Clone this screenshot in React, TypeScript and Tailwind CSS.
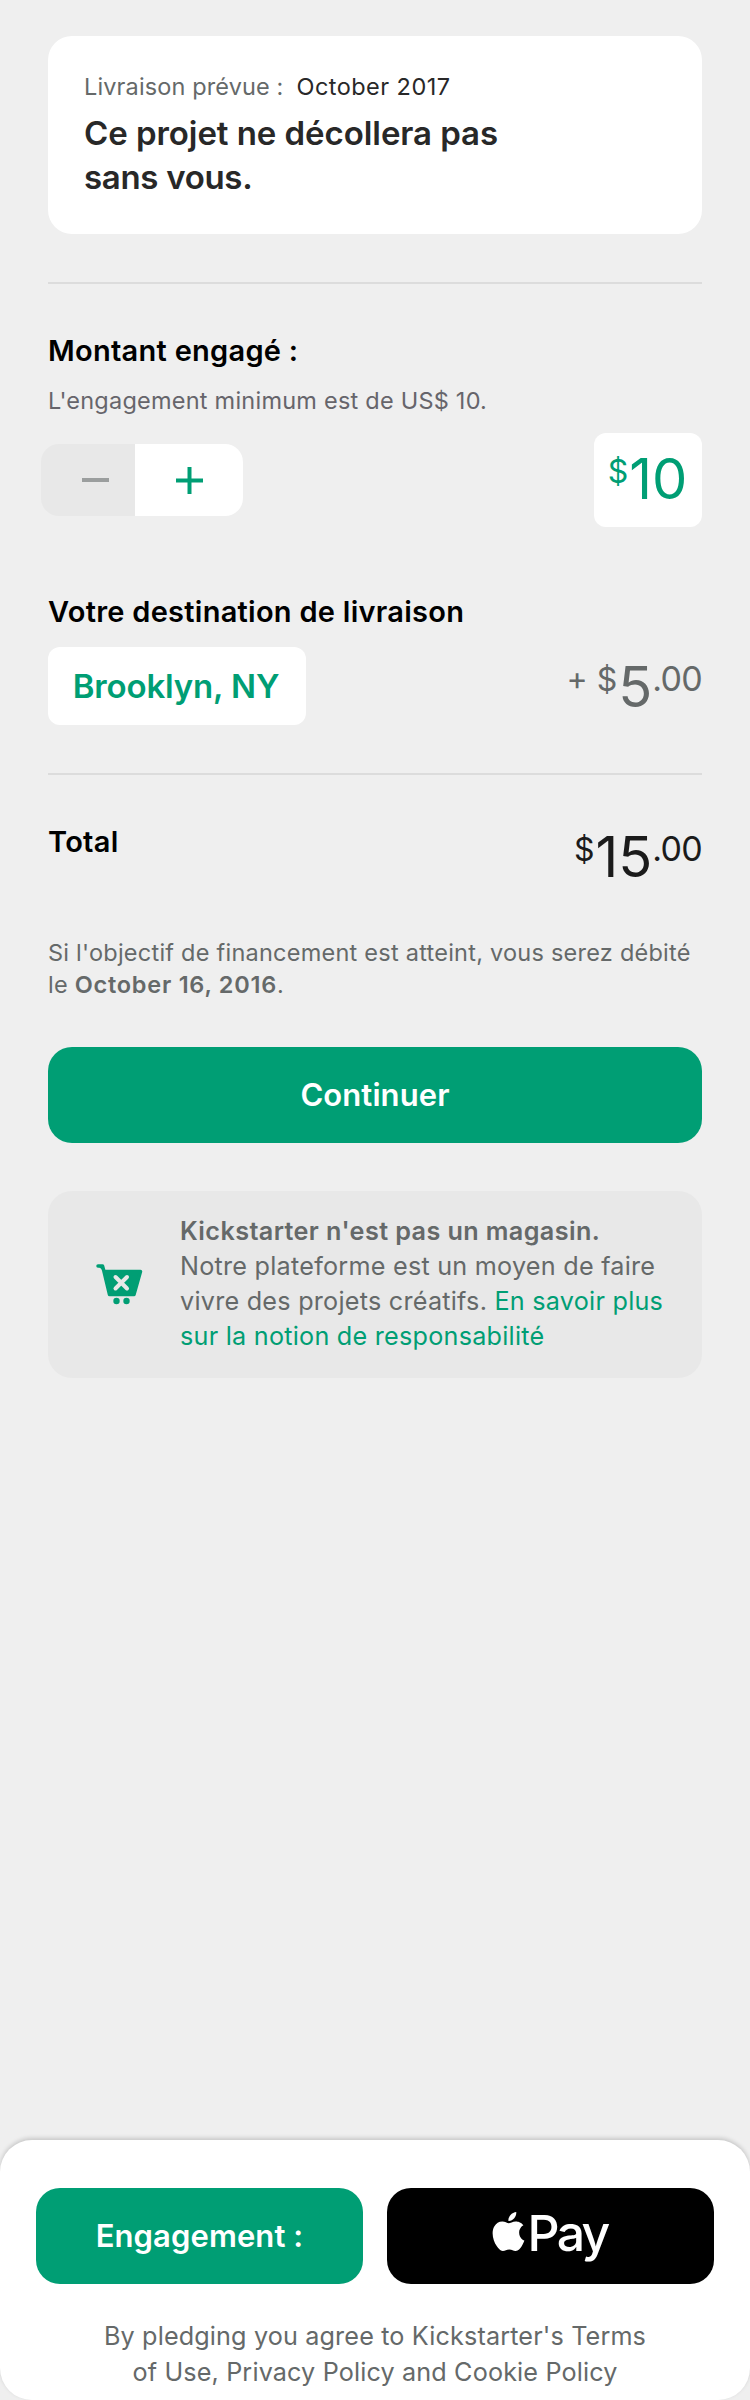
import type { ReactNode } from "react";
import { SiApple } from "react-icons/si";

function Divider() {
  return <div className="mt-12 h-0.5 shrink-0 bg-[#dcdcdc]" />;
}

function Heading({ children, className }: { children: ReactNode; className: string }) {
  return (
    <h2 className={`text-[29px] leading-[38px] font-semibold tracking-[0.27px] whitespace-nowrap text-black ${className}`}>
      {children}
    </h2>
  );
}

function Stepper() {
  return (
    <div className="-ml-[7px] flex h-[72px] w-[202px] overflow-hidden rounded-[18px]">
      <button className="flex w-[94px] items-center justify-end bg-[#e8e8e8] pr-[26px]" aria-label="-">
        <span className="h-1 w-[27px] bg-[#9b9e9e]" />
      </button>
      <button className="flex flex-1 items-center justify-center bg-white text-[#009e74]" aria-label="+">
        <svg viewBox="0 0 27 27" className="h-[27px] w-[27px]" fill="currentColor">
          <path d="M11.500 0h4v11.500H27v4H15.500V27h-4V15.500H0v-4h11.500z" />
        </svg>
      </button>
    </div>
  );
}

function Price({ whole, cents, plus }: { whole: string; cents?: string; plus?: boolean }) {
  return (
    <div className="flex items-start whitespace-nowrap">
      {plus && <span className="mt-[3px] mr-[9px] text-[32px] leading-[34px]">+</span>}
      <span className="mt-[4px] mr-px text-[32px] leading-[34px]">$</span>
      <span className="text-[56px] leading-[56px]">{whole}</span>
      {cents && (
        <span className="mt-[3px] text-[34px] leading-[34px] tracking-[-0.7px]">{cents}</span>
      )}
    </div>
  );
}

function CartIcon() {
  return (
    <svg viewBox="0 0 47 41" className="h-[41px] w-[47px]">
      <path
        d="M2 2H6.500L8 7.500H44.500L38 30.500H13.500L8 7.500"
        fill="#009e74"
        stroke="#009e74"
        strokeWidth="3.500"
        strokeLinecap="round"
        strokeLinejoin="round"
      />
      <path d="M19.500 13L31 24.500M31 13L19.500 24.500" stroke="#e8e8e8" strokeWidth="4" strokeLinecap="round" />
      <circle cx="20.500" cy="37" r="3.200" fill="#009e74" />
      <circle cx="30.500" cy="37" r="3.200" fill="#009e74" />
    </svg>
  );
}

export default function App() {
  return (
    <div className="flex h-[2400px] w-[750px] flex-col bg-[#efefef] font-['Inter',sans-serif] text-[#656969]">
      <main className="flex flex-col px-12 pt-9">
        <section className="h-[198px] rounded-3xl bg-white px-9 pt-[35px] text-[#282828]">
          <p className="flex gap-[13px] text-[23.5px] leading-8 whitespace-nowrap">
            <span className="tracking-[0.13px] text-[#656969]">Livraison prévue :</span>
            <span className="tracking-[0.45px]">October 2017</span>
          </p>
          <h1 className="mt-2 text-[33px] leading-[44px] font-semibold tracking-[-0.06px]">
            Ce projet ne décollera pas
            <br />
            <span className="tracking-[-0.3px]">sans vous.</span>
          </h1>
        </section>

        <Divider />

        <Heading className="mt-12">Montant engagé :</Heading>
        <p className="mt-4 text-[23.5px] leading-[30px] tracking-[0.23px] text-[#66656b]">
          L'engagement minimum est de US$ 10.
        </p>
        <div className="mt-[17px] flex items-center justify-between">
          <Stepper />
          <div className="flex h-[94px] w-[108px] justify-center rounded-xl bg-white pt-[18px] pr-px text-[#009e74]">
            <Price whole="10" />
          </div>
        </div>

        <Heading className="mt-[66px]">Votre destination de livraison</Heading>
        <div className="mt-4 flex h-[78px] items-start justify-between">
          <button className="h-[78px] w-[258px] rounded-xl bg-white pt-0.5 pr-0.5 text-[33px] font-semibold tracking-[-0.15px] whitespace-nowrap text-[#009e74]">
            Brooklyn, NY
          </button>
          <div className="pt-3">
            <Price plus whole="5" cents=".00" />
          </div>
        </div>

        <Divider />

        <div className="mt-12 flex h-[66px] items-start justify-between">
          <Heading className="">Total</Heading>
          <div className="pt-[6px] text-[#1b1b1b]">
            <Price whole="15" cents=".00" />
          </div>
        </div>

        <p className="mt-12 text-[23.5px] leading-8 tracking-[0.24px] whitespace-nowrap">
          Si l'objectif de financement est atteint, vous serez débité
          <br />
          le <strong className="font-semibold tracking-[0.75px]">October 16, 2016</strong>.
        </p>

        <button className="mt-[46px] h-24 rounded-3xl bg-[#009e74] text-[31px] font-semibold tracking-[0.1px] text-white">
          Continuer
        </button>

        <section className="mt-12 flex h-[187px] rounded-3xl bg-[#e8e8e8] pt-[23px] pl-12">
          <div className="mt-[50px] w-[84px] shrink-0">
            <CartIcon />
          </div>
          <p className="text-[25.2px] leading-[35px] tracking-[0.24px] whitespace-nowrap">
            <strong className="font-semibold tracking-[0.4px]">Kickstarter n'est pas un magasin.</strong>
            <br />
            Notre plateforme est un moyen de faire
            <br />
            vivre des projets créatifs. <a className="text-[#009e74]">En savoir plus</a>
            <br />
            <a className="text-[#009e74]">sur la notion de responsabilité</a>
          </p>
        </section>
      </main>

      <footer className="mt-auto h-[260px] rounded-[32px] bg-white px-9 pt-12 shadow-[0_-2px_4px_rgba(0,0,0,0.17)]">
        <div className="grid grid-cols-2 gap-6">
          <button className="h-24 rounded-3xl bg-[#009e74] text-[31px] font-semibold tracking-[0.1px] text-white">
            Engagement :
          </button>
          <button className="flex h-24 items-start justify-center rounded-3xl bg-black pt-[15px] pr-[5px] text-white">
            <SiApple className="mt-[9px] h-[39px] w-[39px]" />
            <span className="text-[50px] leading-[60px] font-medium tracking-[-2.8px]">Pay</span>
          </button>
        </div>
        <p className="mt-[34px] text-center text-[25.2px] leading-9 tracking-[0.14px] whitespace-nowrap">
          By pledging you agree to Kickstarter's Terms
          <br />
          of Use, Privacy Policy and Cookie Policy
        </p>
      </footer>
    </div>
  );
}
